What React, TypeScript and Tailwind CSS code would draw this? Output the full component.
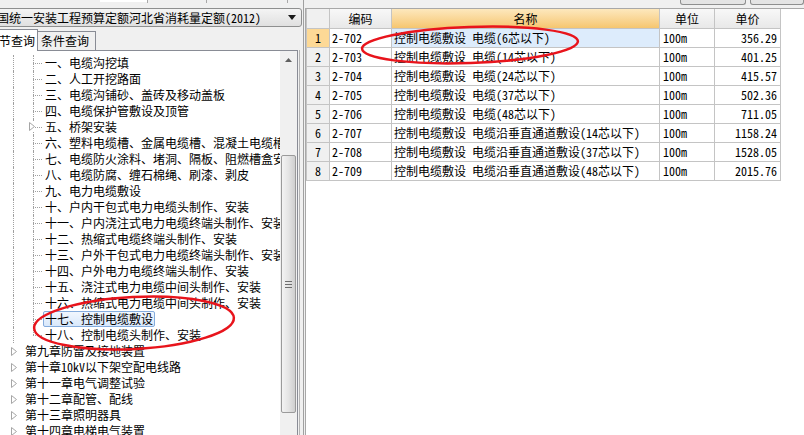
import React from 'react';

const font = "font-['Noto_Sans_Mono_CJK_SC','Noto_Sans_CJK_SC',sans-serif]";

const sections = [
  '一、电缆沟挖填',
  '二、人工开挖路面',
  '三、电缆沟铺砂、盖砖及移动盖板',
  '四、电缆保护管敷设及顶管',
  '五、桥架安装',
  '六、塑料电缆槽、金属电缆槽、混凝土电缆槽盒安装',
  '七、电缆防火涂料、堵洞、隔板、阻燃槽盒安装',
  '八、电缆防腐、缠石棉绳、刷漆、剥皮',
  '九、电力电缆敷设',
  '十、户内干包式电力电缆头制作、安装',
  '十一、户内浇注式电力电缆终端头制作、安装',
  '十二、热缩式电缆终端头制作、安装',
  '十三、户外干包式电力电缆终端头制作、安装',
  '十四、户外电力电缆终端头制作、安装',
  '十五、浇注式电力电缆中间头制作、安装',
  '十六、热缩式电力电缆中间头制作、安装',
  '十七、控制电缆敷设',
  '十八、控制电缆头制作、安装',
];

const chapters = [
  '第九章防雷及接地装置',
  '第十章10kV以下架空配电线路',
  '第十一章电气调整试验',
  '第十二章配管、配线',
  '第十三章照明器具',
  '第十四章电梯电气装置',
];

const rows = [
  ['2-702', '控制电缆敷设 电缆(6芯以下)', '100m', '356.29'],
  ['2-703', '控制电缆敷设 电缆(14芯以下)', '100m', '401.25'],
  ['2-704', '控制电缆敷设 电缆(24芯以下)', '100m', '415.57'],
  ['2-705', '控制电缆敷设 电缆(37芯以下)', '100m', '502.36'],
  ['2-706', '控制电缆敷设 电缆(48芯以下)', '100m', '711.05'],
  ['2-707', '控制电缆敷设 电缆沿垂直通道敷设(14芯以下)', '100m', '1158.24'],
  ['2-708', '控制电缆敷设 电缆沿垂直通道敷设(37芯以下)', '100m', '1528.05'],
  ['2-709', '控制电缆敷设 电缆沿垂直通道敷设(48芯以下)', '100m', '2015.76'],
];

function Expander() {
  return (
    <svg width="6" height="9" viewBox="0 0 6 9" className="shrink-0">
      <path d="M0.5 0.5 L5.5 4.5 L0.5 8.5 Z" fill="white" stroke="#a6a6a6" />
    </svg>
  );
}

function SectionRow({ text, index }: { text: string; index: number }) {
  const last = index === sections.length - 1;
  const selected = index === 16;
  return (
    <div className="flex h-[16px] items-center">
      <div className="h-full w-[13px] shrink-0" />
      <div className="h-full w-[20px] shrink-0 border-l border-dotted border-[#a0a0a0]" />
      <div className="relative h-full w-[10px] shrink-0">
        <div
          className={`absolute left-0 top-0 border-l border-dotted border-[#a0a0a0] ${last ? 'h-[8px]' : 'h-full'}`}
        />
        <div className="absolute left-0 top-[8px] w-[9px] border-t border-dotted border-[#a0a0a0]" />
        {index === 4 && (
          <div className="absolute left-[-4px] top-[3px] bg-white">
            <Expander />
          </div>
        )}
      </div>
      <span
        className={`whitespace-nowrap px-[1px] leading-[14px] ${
          selected ? 'rounded-[2px] border border-[#84acdd] bg-linear-to-b from-[#f1f7fe] to-[#d8e8fb]' : 'border border-transparent'
        }`}
      >
        {text}
      </span>
    </div>
  );
}

function ChapterRow({ text }: { text: string }) {
  return (
    <div className="flex h-[16px] items-center">
      <div className="w-[11px] shrink-0" />
      <Expander />
      <span className="ml-[8px] whitespace-nowrap leading-[14px]">{text}</span>
    </div>
  );
}

function ScrollBar() {
  return (
    <div className="flex w-[17px] shrink-0 flex-col bg-[#f0f0f0]">
      <div className="flex h-[17px] shrink-0 items-center justify-center">
        <svg width="7" height="4" viewBox="0 0 7 4">
          <path d="M0 4 L3.5 0 L7 4 Z" fill="#606060" />
        </svg>
      </div>
      <div className="mx-[1px] mt-[87px] flex h-[258px] shrink-0 items-center justify-center rounded-[2px] border border-[#9a9a9a] bg-linear-to-r from-[#f3f3f3] via-[#e4e4e4] to-[#cfcfcf]">
        <div className="flex flex-col gap-[2px]">
          <div className="h-px w-[7px] bg-[#6e6e6e]" />
          <div className="h-px w-[7px] bg-[#6e6e6e]" />
          <div className="h-px w-[7px] bg-[#6e6e6e]" />
        </div>
      </div>
    </div>
  );
}

const cell = 'flex h-[19px] items-center whitespace-nowrap border-b border-r border-[#c4c4c4] leading-[14px]';
const head = 'flex h-[20px] items-center justify-center border-b border-r border-[#c4c4c4] leading-[14px]';

export default function App() {
  return (
    <div className={`relative flex h-[435px] w-[804px] overflow-hidden bg-[#f0f0f0] text-[12px] text-black ${font}`}>
      {/* left: chapter tree */}
      <div className="flex w-[300px] shrink-0 flex-col">
        <div className="flex h-[8px] items-start">
          <div className="ml-[100px] h-[2px] w-[47px] bg-white" />
          <div className="h-[3px] w-px bg-[#a8a8a8]" />
          <div className="ml-[58px] h-[3px] w-px bg-[#a8a8a8]" />
          <div className="ml-[80px] h-[3px] w-px bg-[#a8a8a8]" />
        </div>
        <div className="relative z-10 -ml-[3px] -mr-[2px] flex h-[19px] items-center overflow-hidden rounded-[3px] border border-[#8e8f8f] bg-linear-to-b from-[#f4f4f4] to-[#e0e0e0]">
          <span className="-ml-[13px] whitespace-nowrap leading-[14px]">全国统一安装工程预算定额河北省消耗量定额(2012)</span>
          <div className="flex-1" />
          <svg width="8" height="5" viewBox="0 0 8 5" className="mr-[5px] shrink-0">
            <path d="M0 0 L8 0 L4 5 Z" fill="#1a1a1a" />
          </svg>
        </div>
        <div className="flex h-[23px] items-end">
          <div className="relative z-10 -mb-px -ml-[2px] flex h-[22px] w-[40px] items-center overflow-hidden border border-b-0 border-[#898c95] bg-white">
            <span className="-ml-[12px] whitespace-nowrap leading-[14px]">章节查询</span>
          </div>
          <div className="flex h-[19px] w-[58px] items-center border border-b-0 border-l-0 border-[#898c95] bg-[#f0f0f0] pl-[3px]">
            <span className="whitespace-nowrap leading-[14px]">条件查询</span>
          </div>
        </div>
        <div className="flex min-h-0 min-w-0 flex-1 border-r border-[#b4b4b4] pr-px">
          <div className="flex min-h-0 min-w-0 flex-1 border-r border-t border-[#898c95] bg-white">
            <div className="min-w-0 flex-1 overflow-hidden pt-[4px]">
              {sections.map((s, i) => (
                <SectionRow key={s} text={s} index={i} />
              ))}
              {chapters.map((c) => (
                <ChapterRow key={c} text={c} />
              ))}
            </div>
            <ScrollBar />
          </div>
        </div>
      </div>

      {/* splitter */}
      <div className="w-[3px] shrink-0" />

      {/* right: quota list */}
      <div className="flex min-w-0 flex-1 flex-col border-l border-[#a0a0a0] pl-px">
        <div className="flex h-[8px] items-start">
          <div className="ml-[375px] h-[5px] w-[73px] rounded-b-[3px] border border-t-0 border-[#8e8f8f] bg-[#e4e4e4]" />
          <div className="ml-[4px] h-[5px] w-[60px] rounded-b-[3px] border border-t-0 border-[#8e8f8f] bg-[#e4e4e4]" />
        </div>
        <div className="flex-1 border-l border-t border-[#a8a8a8] bg-white">
          <div className="grid w-[474px] grid-cols-[23px_62px_268px_55px_66px] border-l border-[#c4c4c4]">
            <div className={`${head} bg-[#f0f0f0]`} />
            <div className={`${head} bg-linear-to-b from-[#f8f8f8] to-[#e8e8e8]`}>编码</div>
            <div className={`${head} bg-linear-to-b from-[#fde8bd] to-[#f6c66f]`}>名称</div>
            <div className={`${head} bg-linear-to-b from-[#f8f8f8] to-[#e8e8e8]`}>单位</div>
            <div className={`${head} bg-linear-to-b from-[#f8f8f8] to-[#e8e8e8]`}>单价</div>
            {rows.map((r, i) => (
              <React.Fragment key={r[0]}>
                <div className={`${cell} justify-center ${i === 0 ? 'bg-[#fdd996]' : 'bg-[#f0f0f0]'}`}>{i + 1}</div>
                <div className={`${cell} pl-[2px]`}>{r[0]}</div>
                <div className={`${cell} pl-[2px] ${i === 0 ? 'bg-[#ddecfc]' : ''}`}>{r[1]}</div>
                <div className={`${cell} pl-[3px]`}>{r[2]}</div>
                <div className={`${cell} justify-end pr-[3px]`}>{r[3]}</div>
              </React.Fragment>
            ))}
          </div>
        </div>
      </div>

      {/* red annotation ellipses */}
      <svg className="pointer-events-none absolute left-0 top-0" width="804" height="435" viewBox="0 0 804 435">
        <ellipse cx="470" cy="45" rx="108" ry="18" transform="rotate(-2 470 45)" fill="none" stroke="#e8141c" strokeWidth="2.5" />
        <ellipse cx="134" cy="323" rx="100" ry="26" transform="rotate(-3 134 323)" fill="none" stroke="#e8141c" strokeWidth="2.5" />
      </svg>
    </div>
  );
}
